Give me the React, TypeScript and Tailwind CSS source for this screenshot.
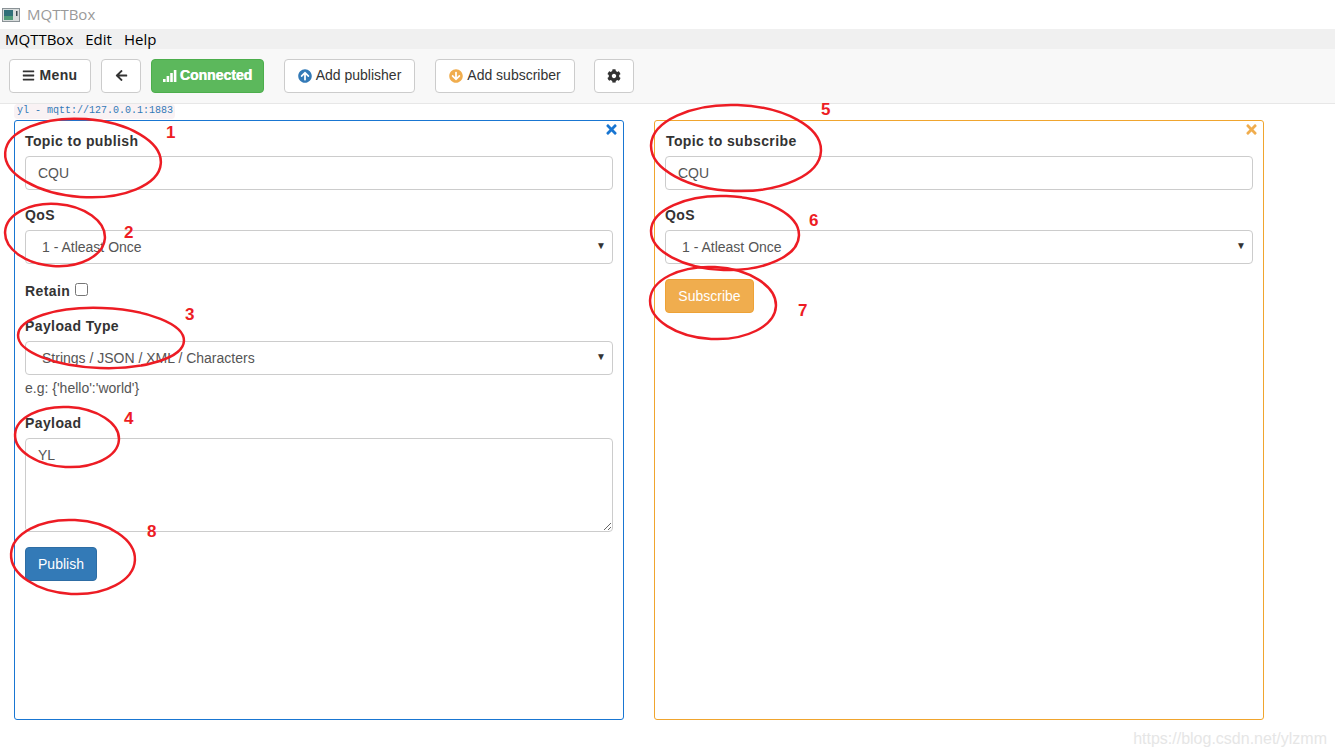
import React from "react";
import { FaBars, FaArrowLeft, FaArrowCircleUp, FaArrowCircleDown, FaCog, FaTimes } from "react-icons/fa";

function Signal() {
  return (
    <svg width="14" height="14" viewBox="0 0 14 14" fill="currentColor">
      <rect x="0" y="10" width="2.6" height="3" />
      <rect x="3.6" y="7" width="2.6" height="6" />
      <rect x="7.2" y="4" width="2.6" height="9" />
      <rect x="10.8" y="1" width="2.6" height="12" />
    </svg>
  );
}

function AppIcon() {
  return (
    <svg width="18" height="14" viewBox="0 0 18 14">
      <rect x="0.5" y="0.5" width="17" height="13" fill="#d8dcdc" stroke="#8a9296" />
      <rect x="2" y="2" width="9" height="10" fill="#2f6f78" />
      <rect x="2" y="8" width="9" height="4" fill="#4f9a78" />
      <rect x="14" y="3" width="1.5" height="5" fill="#3a4a50" />
    </svg>
  );
}

const toolBtn =
  "h-[34px] flex items-center justify-center gap-1 rounded border border-[#cccccc] bg-white text-[14px] text-[#333333]";
const label = "block font-bold text-[14px] leading-[20px] tracking-[0.4px] text-[#333333] mb-[5px]";
const field =
  "block w-full h-[34px] rounded border border-[#cccccc] bg-white px-3 text-[14px] text-[#555555] outline-none";

function Select({ value }: { value: string }) {
  return (
    <div className="relative">
      <select className={field + " appearance-none pl-4"} defaultValue={value}>
        <option>{value}</option>
      </select>
      <span className="absolute right-[7px] top-[8px] text-[10px] leading-[16px] text-[#333333]">▼</span>
    </div>
  );
}

function Panel({ children, border, close }: { children: React.ReactNode; border: string; close: string }) {
  return (
    <section className={"relative w-[610px] h-[600px] rounded-[3px] border bg-white px-[10px] pt-[10px] " + border}>
      <FaTimes className={"absolute right-[4px] top-px text-[15px] " + close} />
      {children}
    </section>
  );
}

const ellipses = [
  { cx: 83, cy: 158, rx: 78, ry: 39, r: 4 },
  { cx: 55, cy: 235, rx: 50, ry: 31, r: 4 },
  { cx: 101, cy: 338, rx: 83, ry: 30, r: 2 },
  { cx: 67, cy: 437, rx: 52, ry: 30, r: 3 },
  { cx: 73, cy: 557, rx: 62, ry: 37, r: 3 },
  { cx: 736, cy: 148, rx: 85, ry: 43, r: 2 },
  { cx: 725, cy: 233, rx: 74, ry: 37, r: 2 },
  { cx: 713, cy: 303, rx: 63, ry: 36, r: 3 },
];

const numbers = [
  { n: "1", cls: "left-[166px] top-[122px]" },
  { n: "2", cls: "left-[124px] top-[222px]" },
  { n: "3", cls: "left-[185px] top-[304px]" },
  { n: "4", cls: "left-[124px] top-[408px]" },
  { n: "5", cls: "left-[821px] top-[99px]" },
  { n: "6", cls: "left-[809px] top-[210px]" },
  { n: "7", cls: "left-[798px] top-[300px]" },
  { n: "8", cls: "left-[147px] top-[521px]" },
];

export default function App() {
  return (
    <div className="relative h-[756px] w-[1335px] overflow-hidden bg-white font-['Liberation_Sans',sans-serif]">
      <div className="h-[29px] flex items-center gap-[7px] pl-[2px] font-['Open_Sans',sans-serif] text-[15px] text-[#9a9a9a]">
        <AppIcon />
        <span>MQTTBox</span>
      </div>
      <nav className="h-[20px] flex items-center gap-[12px] bg-[#f0f0f0] pl-[5px] font-['Open_Sans',sans-serif] text-[15px] text-black">
        <span>MQTTBox</span>
        <span>Edit</span>
        <span>Help</span>
      </nav>
      <header className="h-[55px] flex items-center border-b border-[#e7e7e7] bg-[#f8f8f8] pl-[9px] pb-px">
        <button className={toolBtn + " w-[82px] font-bold tracking-[0.4px]"}>
          <FaBars className="text-[13px]" />
          Menu
        </button>
        <button className={toolBtn + " w-[40px] ml-[10px]"}>
          <FaArrowLeft className="text-[13px]" />
        </button>
        <button className="h-[34px] w-[113px] ml-[10px] flex items-center justify-center gap-[3px] rounded border border-[#4cae4c] bg-[#5cb85c] text-[14px] font-semibold text-white [text-shadow:0.3px_0_0_#fff]">
          <Signal />
          Connected
        </button>
        <button className={toolBtn + " w-[131px] ml-[20px]"}>
          <FaArrowCircleUp className="text-[14px] text-[#337ab7]" />
          Add publisher
        </button>
        <button className={toolBtn + " w-[140px] ml-[20px]"}>
          <FaArrowCircleDown className="text-[14px] text-[#f0ad4e]" />
          Add subscriber
        </button>
        <button className={toolBtn + " w-[40px] ml-[19px]"}>
          <FaCog className="text-[14px]" />
        </button>
      </header>
      <div className="pl-[14px]">
        <div className="ml-0 h-[15px] w-[161px] rounded-sm bg-[#f9f2f4] pl-[3px] font-['Liberation_Mono',monospace] text-[10px] leading-[14px] text-[#337ab7]">
          yl - mqtt://127.0.0.1:1883
        </div>
        <div className="flex gap-[30px] mt-px">
          <Panel border="border-[#1976d2]" close="text-[#1976d2]">
            <label className={label}>Topic to publish</label>
            <input className={field} defaultValue="CQU" readOnly />
            <label className={label + " mt-[15px]"}>QoS</label>
            <Select value="1 - Atleast Once" />
            <div className="mt-[17px] flex items-center gap-[5px] h-[20px]">
              <span className="font-bold text-[14px] tracking-[0.4px] text-[#333333]">Retain</span>
              <input type="checkbox" className="h-[13px] w-[13px] -mt-[3px]" readOnly />
            </div>
            <label className={label + " mt-[15px]"}>Payload Type</label>
            <Select value="Strings / JSON / XML / Characters" />
            <p className="mt-[3px] text-[14px] leading-[20px] text-[#555555]">e.g: {"{'hello':'world'}"}</p>
            <label className={label + " mt-[15px]"}>Payload</label>
            <textarea
              className="block w-full h-[94px] rounded border border-[#cccccc] bg-white px-3 py-[6px] text-[14px] leading-[20px] text-[#555555] outline-none"
              defaultValue="YL"
              readOnly
            />
            <button className="mt-[15px] block h-[34px] w-[72px] rounded border border-[#2e6da4] bg-[#337ab7] text-[14px] text-white">
              Publish
            </button>
          </Panel>
          <Panel border="border-[#f0a52e]" close="text-[#f0ad4e]">
            <label className={label + " pl-px"}>Topic to subscribe</label>
            <input className={field} defaultValue="CQU" readOnly />
            <label className={label + " mt-[15px]"}>QoS</label>
            <Select value="1 - Atleast Once" />
            <button className="mt-[15px] block h-[34px] w-[89px] rounded border border-[#eea236] bg-[#f0ad4e] text-[14px] text-white">
              Subscribe
            </button>
          </Panel>
        </div>
      </div>

      <svg className="absolute left-0 top-0 pointer-events-none" width="1335" height="756" fill="none">
        {ellipses.map((e, i) => (
          <ellipse
            key={i}
            cx={e.cx}
            cy={e.cy}
            rx={e.rx}
            ry={e.ry}
            stroke="#ed1c24"
            strokeWidth="2.5"
            transform={`rotate(${e.r} ${e.cx} ${e.cy})`}
          />
        ))}
      </svg>
      {numbers.map((x) => (
        <span key={x.n} className={"absolute font-bold text-[17px] leading-[22px] text-[#ed1c24] " + x.cls}>
          {x.n}
        </span>
      ))}
      <span className="absolute right-[8px] top-[729px] text-[16px] leading-[20px] text-[#e6e6e6]">
        https://blog.csdn.net/ylzmm
      </span>
    </div>
  );
}
